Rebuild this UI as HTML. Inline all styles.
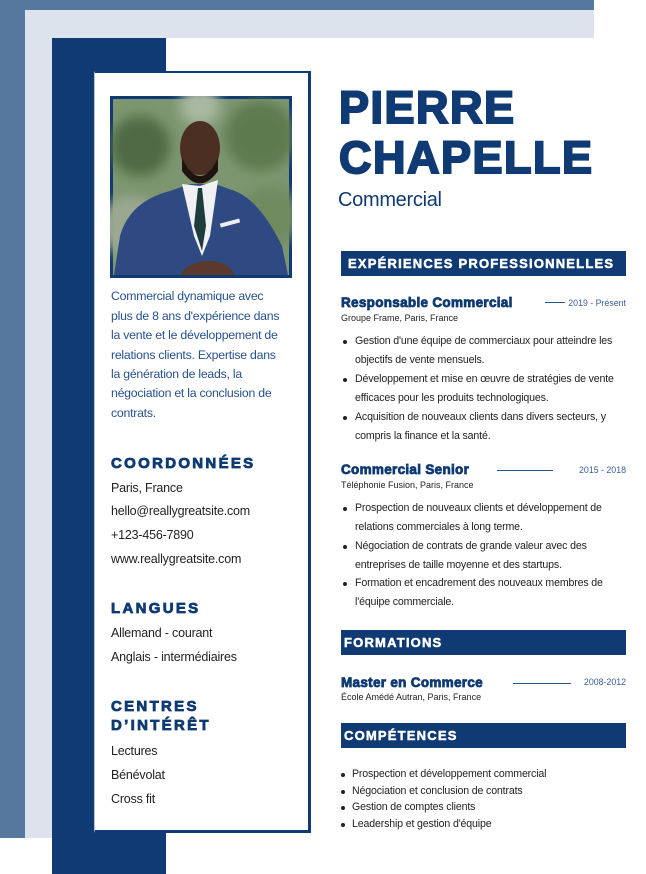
<!DOCTYPE html>
<html><head><meta charset="utf-8"><style>
*{margin:0;padding:0;box-sizing:border-box}
body{width:646px;height:874px;background:#fff;position:relative;overflow:hidden;font-family:"Liberation Sans",sans-serif}
.a{position:absolute;white-space:nowrap}
.h{font-family:"Liberation Sans",sans-serif;font-weight:bold;color:#0f3a73;-webkit-text-stroke:0.8px #0f3a73}
.bar{position:absolute;left:341px;width:285px;height:25px;background:#0f3a73;color:#fff;font-weight:bold;font-size:13px;letter-spacing:1.2px;padding-left:7px;line-height:25px;-webkit-text-stroke:0.5px #fff}
.l{color:#222;font-size:12.5px;letter-spacing:-.2px}
.s{color:#27508f;font-size:12.3px;letter-spacing:-.25px}
.b{color:#222;font-size:10.6px;letter-spacing:-.15px}
.dot{position:absolute;width:4px;height:4px;border-radius:50%;background:#222}
.ln{position:absolute;height:1px;background:#2c538f}
.d{color:#3a5e96;font-size:8.8px;position:absolute;right:20px;white-space:nowrap}
.sm{color:#222;font-size:9px}
</style></head><body>
<div class="a" style="left:0;top:0;width:594px;height:10px;background:#56789f"></div>
<div class="a" style="left:0;top:0;width:25px;height:838px;background:#56789f"></div>
<div class="a" style="left:25px;top:10px;width:569px;height:28px;background:#dce3ec"></div>
<div class="a" style="left:25px;top:10px;width:27px;height:828px;background:#dce3ec"></div>
<div class="a" style="left:52px;top:38px;width:114px;height:836px;background:#0f3a73"></div>
<div class="a" style="left:94px;top:71px;width:217px;height:762px;background:#fff;border:1px solid #b8c6da;border-right:3px solid #0f3a73;border-top:2px solid #0f3a73;border-bottom:3px solid #0f3a73"></div>
<svg class="a" style="left:110px;top:96px" width="182" height="182" viewBox="0 0 182 182">
<defs><filter id="bl"><feGaussianBlur stdDeviation="6"/></filter></defs>
<rect x="0" y="0" width="182" height="182" fill="#0f3a73"/>
<rect x="3" y="3" width="176" height="176" fill="#7d9670"/>
<g filter="url(#bl)"><circle cx="30" cy="50" r="30" fill="#4f6b45"/><circle cx="150" cy="40" r="35" fill="#5d7a50"/><circle cx="160" cy="120" r="30" fill="#6f8a60"/><circle cx="20" cy="130" r="30" fill="#9aa890"/><circle cx="90" cy="10" r="20" fill="#a9b8a0"/></g>
<path d="M4 179 L10 140 Q20 105 60 95 L80 88 L105 88 L125 95 Q150 105 172 150 L178 179 Z" fill="#2f4a83"/>
<path d="M90 90 L108 84 L100 140 L92 160 L84 140 L72 88 Z" fill="#f1f1f3"/>
<path d="M88 92 L84 130 L92 155 L96 130 L92 92 Z" fill="#1c3d3c"/>
<path d="M70 179 Q78 165 100 165 Q118 165 125 179 Z" fill="#5a3a2a"/>
<ellipse cx="90" cy="52" rx="20" ry="27" fill="#4a2f22"/>
<path d="M72 62 Q90 98 108 62 L108 75 Q90 100 72 75Z" fill="#1f1410"/>
<rect x="110" y="125" width="20" height="4" fill="#eee" transform="rotate(-15 120 127)"/>
</svg>
<div class="a h" style="left:339px;top:83px;font-size:45px;letter-spacing:1.5px;line-height:50px;-webkit-text-stroke:2px #0f3a73">PIERRE</div>
<div class="a h" style="left:339px;top:133px;font-size:45px;letter-spacing:1.5px;line-height:50px;-webkit-text-stroke:2px #0f3a73">CHAPELLE</div>
<div class="a" style="left:338px;top:189px;font-size:20px;color:#0f3a73;letter-spacing:-.3px">Commercial</div>

<div class="a s" style="left:111px;top:289px">Commercial dynamique avec</div>
<div class="a s" style="left:111px;top:309px">plus de 8 ans d'expérience dans</div>
<div class="a s" style="left:111px;top:328px">la vente et le développement de</div>
<div class="a s" style="left:111px;top:348px">relations clients. Expertise dans</div>
<div class="a s" style="left:111px;top:367px">la génération de leads, la</div>
<div class="a s" style="left:111px;top:386px">négociation et la conclusion de</div>
<div class="a s" style="left:111px;top:406px">contrats.</div>

<div class="a h" style="left:111px;top:455px;font-size:15px;letter-spacing:2.3px">COORDONNÉES</div>
<div class="a l" style="left:111px;top:481px">Paris, France</div>
<div class="a l" style="left:111px;top:504px">hello@reallygreatsite.com</div>
<div class="a l" style="left:111px;top:528px">+123-456-7890</div>
<div class="a l" style="left:111px;top:552px">www.reallygreatsite.com</div>
<div class="a h" style="left:111px;top:600px;font-size:15px;letter-spacing:2.3px">LANGUES</div>
<div class="a l" style="left:111px;top:626px">Allemand - courant</div>
<div class="a l" style="left:111px;top:650px">Anglais - intermédiaires</div>
<div class="a h" style="left:111px;top:698px;font-size:15px;letter-spacing:2.3px">CENTRES</div>
<div class="a h" style="left:111px;top:717px;font-size:15px;letter-spacing:2.3px">D’INTÉRÊT</div>
<div class="a l" style="left:111px;top:744px">Lectures</div>
<div class="a l" style="left:111px;top:768px">Bénévolat</div>
<div class="a l" style="left:111px;top:792px">Cross fit</div>

<div class="bar" style="top:251px">EXPÉRIENCES PROFESSIONNELLES</div>
<div class="a h" style="left:341px;top:295px;font-size:13.5px;letter-spacing:.3px">Responsable Commercial</div>
<div class="ln" style="left:545px;top:302px;width:20px"></div>
<div class="d" style="top:298px">2019 - Présent</div>
<div class="a sm" style="left:341px;top:313px">Groupe Frame, Paris, France</div>
<div class="dot" style="left:343px;top:340px"></div><div class="a b" style="left:355px;top:335px">Gestion d'une équipe de commerciaux pour atteindre les</div>
<div class="a b" style="left:355px;top:354px">objectifs de vente mensuels.</div>
<div class="dot" style="left:343px;top:378px"></div><div class="a b" style="left:355px;top:373px">Développement et mise en œuvre de stratégies de vente</div>
<div class="a b" style="left:355px;top:392px">efficaces pour les produits technologiques.</div>
<div class="dot" style="left:343px;top:416px"></div><div class="a b" style="left:355px;top:411px">Acquisition de nouveaux clients dans divers secteurs, y</div>
<div class="a b" style="left:355px;top:430px">compris la finance et la santé.</div>

<div class="a h" style="left:341px;top:462px;font-size:13.5px;letter-spacing:.3px">Commercial Senior</div>
<div class="ln" style="left:497px;top:470px;width:56px"></div>
<div class="d" style="top:465px">2015 - 2018</div>
<div class="a sm" style="left:341px;top:480px">Téléphonie Fusion, Paris, France</div>
<div class="dot" style="left:343px;top:507px"></div><div class="a b" style="left:355px;top:502px">Prospection de nouveaux clients et développement de</div>
<div class="a b" style="left:355px;top:521px">relations commerciales à long terme.</div>
<div class="dot" style="left:343px;top:545px"></div><div class="a b" style="left:355px;top:540px">Négociation de contrats de grande valeur avec des</div>
<div class="a b" style="left:355px;top:559px">entreprises de taille moyenne et des startups.</div>
<div class="dot" style="left:343px;top:582px"></div><div class="a b" style="left:355px;top:577px">Formation et encadrement des nouveaux membres de</div>
<div class="a b" style="left:355px;top:596px">l'équipe commerciale.</div>

<div class="bar" style="top:630px;padding-left:3px">FORMATIONS</div>
<div class="a h" style="left:341px;top:675px;font-size:13.5px;letter-spacing:.3px">Master en Commerce</div>
<div class="ln" style="left:513px;top:683px;width:58px"></div>
<div class="d" style="top:677px">2008-2012</div>
<div class="a sm" style="left:341px;top:692px">École Amédé Autran, Paris, France</div>

<div class="bar" style="top:723px;padding-left:3px">COMPÉTENCES</div>
<div class="dot" style="left:341px;top:773px"></div><div class="a b" style="left:352px;top:768px">Prospection et développement commercial</div>
<div class="dot" style="left:341px;top:790px"></div><div class="a b" style="left:352px;top:785px">Négociation et conclusion de contrats</div>
<div class="dot" style="left:341px;top:806px"></div><div class="a b" style="left:352px;top:801px">Gestion de comptes clients</div>
<div class="dot" style="left:341px;top:823px"></div><div class="a b" style="left:352px;top:818px">Leadership et gestion d'équipe</div>
</body></html>
